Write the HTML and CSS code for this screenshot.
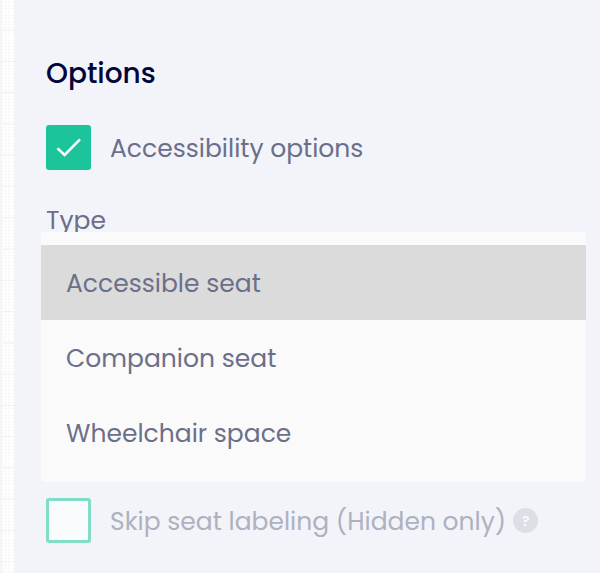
FILE: index.html
```html
<!DOCTYPE html>
<html lang="en">
<head>
<meta charset="utf-8">
<title>Options</title>
<link rel="stylesheet" href="styles.css">
</head>
<body>
<main class="panel">
  <h2 class="heading">Options</h2>
  <div class="option">
    <span class="checkbox checked"><svg viewBox="0 0 45 45" width="45" height="45"><path d="M11.5 23.4 18.6 29.9 34 14.3" fill="none" stroke="#fff" stroke-width="2.6"/></svg></span>
    <span class="label">Accessibility options</span>
  </div>
  <div class="field">
    <div class="field-label">Type</div>
    <div class="menu">
      <div class="item selected">Accessible seat</div>
      <div class="item">Companion seat</div>
      <div class="item">Wheelchair space</div>
    </div>
  </div>
  <div class="option disabled">
    <span class="checkbox"></span>
    <span class="label">Skip seat labeling (Hidden only)</span>
    <span class="help">?</span>
  </div>
</main>
</body>
</html>
```
FILE: styles.css
```css
* { box-sizing: border-box; }
body {
  margin: 0;
  height: 573px;
  overflow: hidden;
  display: flex;
  background-color: #fff;
  background-image:
    linear-gradient(#f5f5f5, #f5f5f5),
    linear-gradient(#f0f0f0 1.2px, transparent 1.2px),
    repeating-linear-gradient(90deg, transparent 0 2.125px, #f9f9f9 2.125px 3.125px),
    repeating-linear-gradient(transparent 0 2.125px, #f9f9f9 2.125px 3.125px);
  background-size: 2px 100%, 100% 31.27px, auto, auto;
  background-position: 0 0, 0 29.6px, 0 0, 0 0;
  background-repeat: no-repeat, repeat, repeat, repeat;
  font-family: Poppins, Inter, "Open Sans", sans-serif;
  font-size: 25px;
  color: #6c6f89;
  white-space: nowrap;
}
.panel {
  flex: 1;
  margin-left: 14px;
  padding: 53px 14px 0 32px;
  background: #f2f4fa;
}
.heading {
  margin: 0 0 31px;
  font-size: 28px;
  line-height: 41px;
  font-weight: 500;
  color: #020538;
}
.option { display: flex; align-items: center; height: 45px; }
.label { padding-top: 3px; }
.checkbox {
  width: 45px;
  height: 45px;
  margin-right: 19px;
  border: 3px solid #80dec7;
  border-radius: 3px;
  background: #fafbfd;
}
.checkbox.checked { border: 0; background: #1bc49b; }
.checkbox svg { display: block; }
.field { position: relative; height: 328px; padding-top: 31px; }
.field-label { line-height: 40px; }
.menu {
  position: absolute;
  left: -5px;
  right: 0;
  top: 62px;
  height: 250px;
  padding: 13px 0 12px;
  border-radius: 4px;
  background: #fafafa;
}
.item { height: 75px; padding-left: 25px; line-height: 77px; }
.item.selected { background: #dbdbdb; }
.disabled .label { color: #aeb1c0; }
.help {
  width: 25px;
  height: 25px;
  margin-left: 7px;
  border-radius: 50%;
  background: #dddee6;
  color: #fafafd;
  font-size: 14px;
  font-weight: 600;
  line-height: 26px;
  text-align: center;
}
```
